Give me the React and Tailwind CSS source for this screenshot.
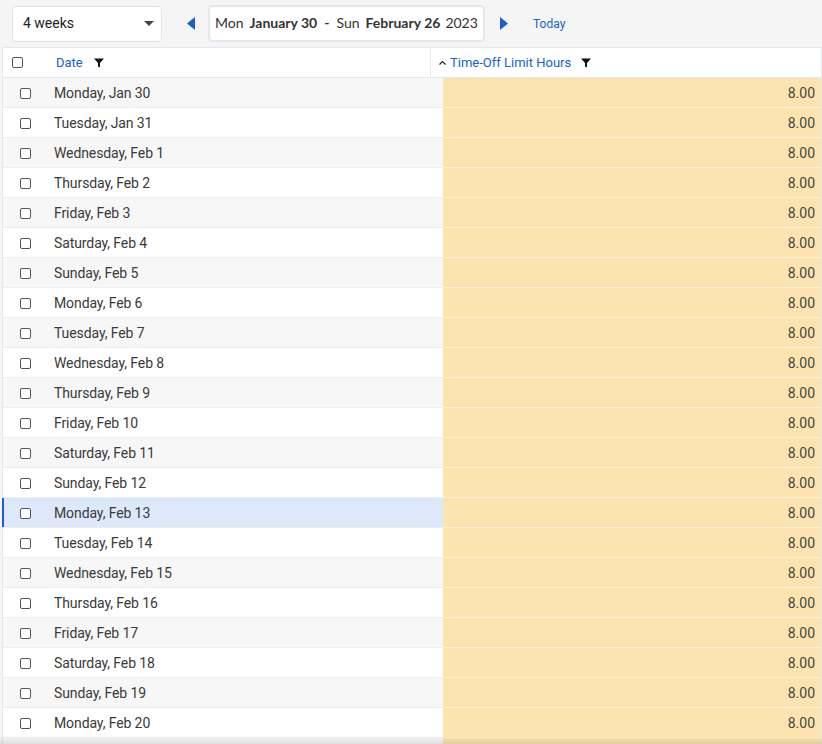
import React from 'react';

const days = [
    'Monday, Jan 30', 'Tuesday, Jan 31', 'Wednesday, Feb 1', 'Thursday, Feb 2', 'Friday, Feb 3',
    'Saturday, Feb 4', 'Sunday, Feb 5', 'Monday, Feb 6', 'Tuesday, Feb 7', 'Wednesday, Feb 8',
    'Thursday, Feb 9', 'Friday, Feb 10', 'Saturday, Feb 11', 'Sunday, Feb 12', 'Monday, Feb 13',
    'Tuesday, Feb 14', 'Wednesday, Feb 15', 'Thursday, Feb 16', 'Friday, Feb 17', 'Saturday, Feb 18',
    'Sunday, Feb 19', 'Monday, Feb 20',
];

const Box = () => (
    <span className="block w-[11px] h-[11px] rounded-[2px] border border-[#555] bg-white" />
);

const Funnel = () => (
    <svg width="10" height="10" viewBox="0 0 10 10">
        <path d="M0 0.5h10L6 5v4.5L4 8.5V5z" fill="#111" />
    </svg>
);

const App = () => {
    return (
        <div className="w-[822px] h-[744px] overflow-hidden bg-[#f5f5f5] font-['Roboto',sans-serif] relative">
            {/* toolbar */}
            <div className="h-[47px] flex items-center pl-[12px]">
                <div className="w-[150px] h-[36px] bg-white border border-[#dfe3e8] rounded-[4px] flex items-center justify-between pl-[10px] pr-[7px] text-[14px] text-[#222]">
                    <span>4 weeks</span>
                    <svg width="10" height="5" viewBox="0 0 10 5"><path d="M0 0h10L5 5z" fill="#444" /></svg>
                </div>
                <svg className="ml-[25px]" width="8" height="13" viewBox="0 0 8 13"><path d="M8 0v13L0 6.5z" fill="#1a5fd1" /></svg>
                <div className="ml-[13px] h-[37px] w-[277px] bg-white border-2 border-[#e3e7ee] rounded-[5px] flex items-center pl-[5px] pb-[2px] font-['Lato',sans-serif] text-[14px] text-[#333] whitespace-nowrap">
                    <span>Mon</span>
                    <span className="ml-[6px] font-bold">January 30</span>
                    <span className="ml-[7px] font-bold">-</span>
                    <span className="ml-[7px]">Sun</span>
                    <span className="ml-[6px] font-bold">February 26</span>
                    <span className="ml-[5px]">2023</span>
                </div>
                <svg className="ml-[15px]" width="8" height="13" viewBox="0 0 8 13"><path d="M0 0v13L8 6.5z" fill="#1a5fd1" /></svg>
                <span className="ml-[25px] pt-[1px] text-[12px] text-[#1a5fd1]">Today</span>
            </div>

            {/* grid */}
            <div className="ml-[2px] border-l border-t border-r border-[#e3e7ee] bg-white">
                <div className="h-[30px] flex items-center border-b border-[#e3e7ee] text-[13px]">
                    <div className="w-[428px] h-full flex items-center border-r border-[#e3e7ee]">
                        <span className="ml-[9px]"><Box /></span>
                        <span className="ml-[33px] text-[#1a5fd1]">Date</span>
                        <span className="ml-[11px]"><Funnel /></span>
                    </div>
                    <div className="flex items-center h-full">
                        <svg className="ml-[8px]" width="7" height="5" viewBox="0 0 7 5"><path d="M0.5 4.5L3.5 1.5L6.5 4.5" stroke="#222" fill="none" strokeWidth="1.2" /></svg>
                        <span className="ml-[4px] text-[#1a5fd1]">Time-Off Limit Hours</span>
                        <span className="ml-[10px]"><Funnel /></span>
                    </div>
                </div>
                {days.map((d, i) => {
                    const selected = d === 'Monday, Feb 13';
                    const bg = selected ? 'bg-[#dde9fb]' : i % 2 === 0 ? 'bg-[#f7f7f7]' : 'bg-white';
                    return (
                        <div key={d} className="h-[30px] flex">
                            <div className={`w-[440px] flex items-center pt-[2px] border-b border-[#eeeeee] relative ${bg}`}>
                                {selected && <span className="absolute left-[-1px] top-0 bottom-0 w-[2px] bg-[#1a5fd1]" />}
                                <span className="ml-[17px]"><Box /></span>
                                <span className="ml-[23px] text-[14px] text-[#3a3a3a] tracking-[-0.1px]">{d}</span>
                            </div>
                            <div className="flex-1 flex items-center justify-end pt-[2px] pr-[6px] bg-[#fbe4b0] border-b border-[#fdf1d6] text-[14px] text-[#444]">
                                8.00
                            </div>
                        </div>
                    );
                })}
                <div className="h-[30px] flex">
                    <div className="w-[440px] bg-[#f7f7f7]" />
                    <div className="flex-1 bg-[#fbe4b0]" />
                </div>
            </div>
            <div className="absolute left-0 right-0 bottom-0 h-[8px] bg-gradient-to-b from-transparent to-black/10 pointer-events-none" />
        </div>
    );
};

export default App;
